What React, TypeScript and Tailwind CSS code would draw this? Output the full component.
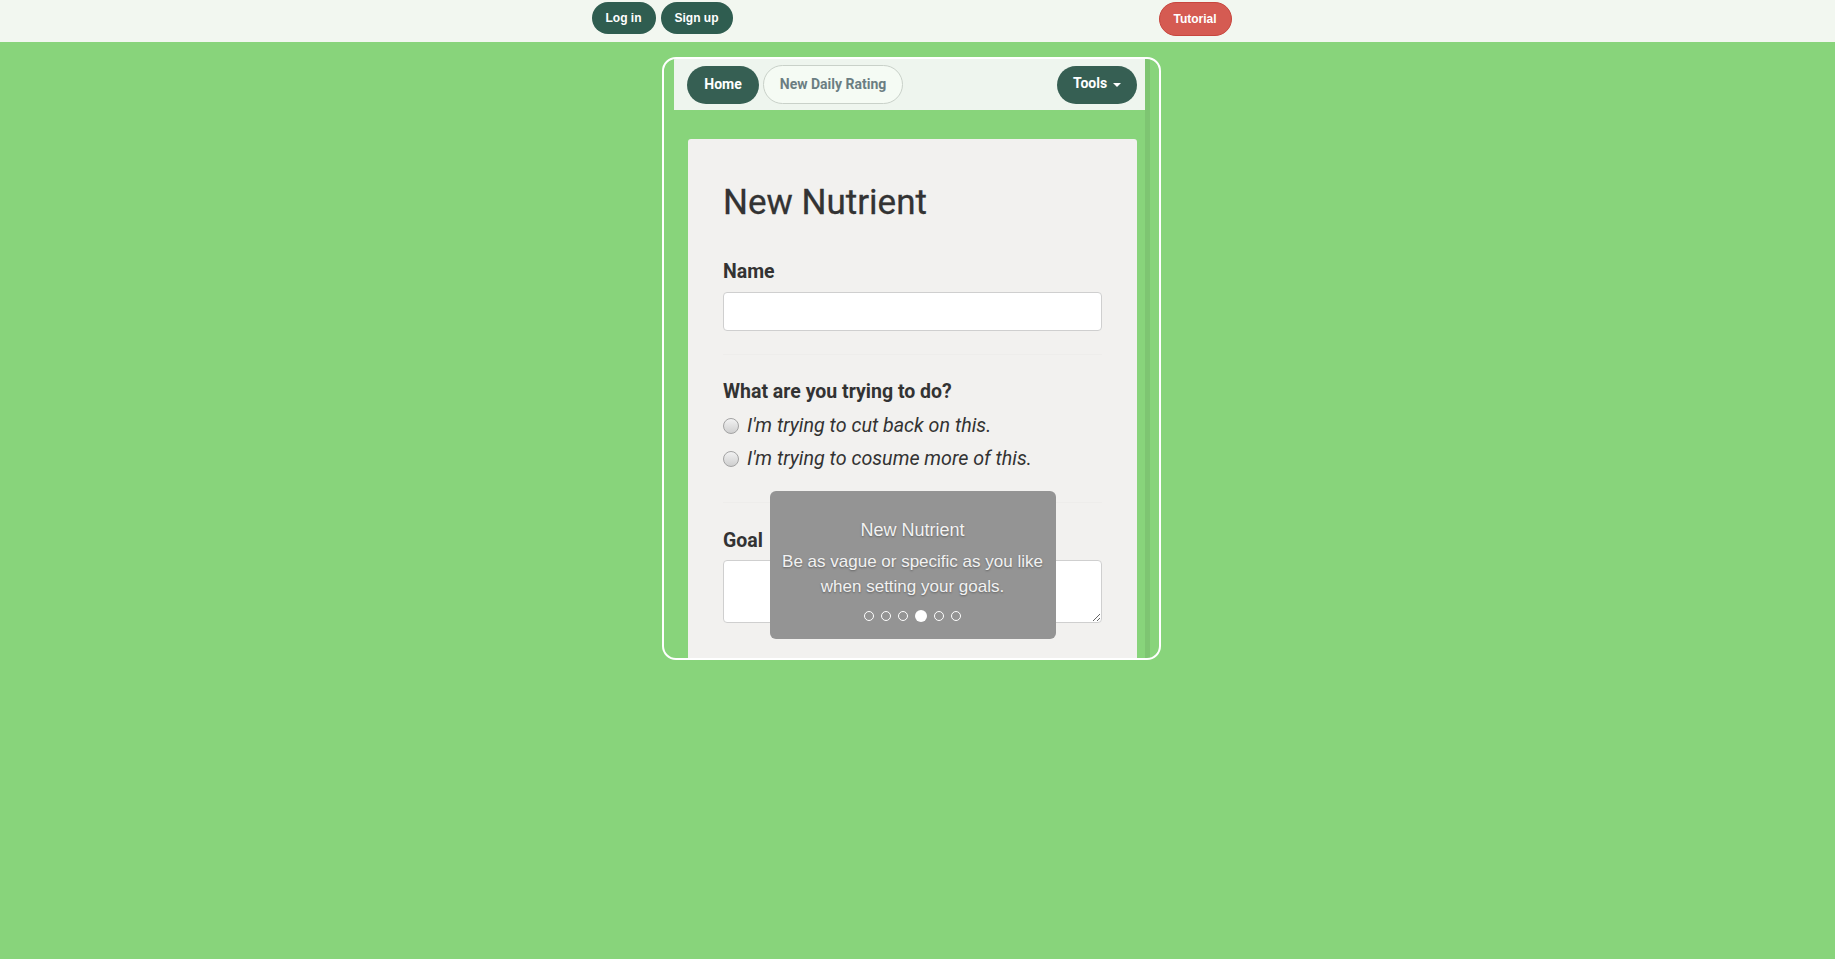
import React from 'react';

const sans = { fontFamily: '"Liberation Sans", Arial, sans-serif' };
const roboto = { fontFamily: 'Roboto, "Liberation Sans", sans-serif' };

function Radio({ label }: { label: string }) {
  return (
    <label className="flex items-center h-[33px]">
      <span className="w-4 h-4 rounded-full border border-[#a3a3a3] bg-gradient-to-b from-[#f2f2f2] to-[#cfcfcf] shrink-0" />
      <span className="ml-2 text-[19.7px] italic text-[#333] leading-[33px]">{label}</span>
    </label>
  );
}

export default function App() {
  const dots = [0, 1, 2, 3, 4, 5];
  return (
    <div className="min-h-screen bg-[#88d47b]">
      {/* Top bar */}
      <div className="h-[42px] bg-[#f2f7f0] flex justify-center pr-[12px]" style={sans}>
        <div className="w-[652px] flex items-start pt-[2px] px-[6px]">
          <button className="h-8 w-16 rounded-full bg-[#2f5d50] text-white text-[12px] font-bold">Log in</button>
          <button className="h-8 w-[72px] ml-[5px] rounded-full bg-[#2f5d50] text-white text-[12px] font-bold">Sign up</button>
          <button className="h-[34px] w-[73px] ml-auto rounded-full bg-[#d55b52] border border-[#c8463e] text-white text-[12px] font-bold">Tutorial</button>
        </div>
      </div>

      {/* Frame */}
      <div className="flex justify-center pr-[12px] pt-[15px]">
        <div className="w-[499px] h-[603px] border-2 border-white rounded-[14px] overflow-hidden flex pl-[10px] pr-[9px]" style={roboto}>
          <div className="flex-1 flex flex-col">
            {/* Navbar */}
            <div className="h-[51px] bg-[#eef5ee] flex items-center pl-[13px] pr-[8px] shrink-0">
              <button className="h-[38px] w-[72px] rounded-full bg-[#365f53] text-white text-[14px] font-bold pb-[1px]">Home</button>
              <button className="h-[39px] w-[140px] ml-[4px] rounded-full bg-[#f5fbf4] border border-[#c9d1c9] text-[#6b7e82] text-[14px] font-bold">New Daily Rating</button>
              <button className="h-[38px] w-[80px] ml-auto rounded-full bg-[#365f53] text-white text-[14px] font-bold flex items-center justify-center gap-[6px] pb-[2px]">
                Tools
                <span className="w-0 h-0 border-l-[4px] border-r-[4px] border-t-[4px] border-l-transparent border-r-transparent border-t-white mt-[2px]" />
              </button>
            </div>

            {/* Card */}
            <div className="pt-[29px] pl-[14px] pr-[8px]">
              <div className="relative bg-[#f2f1ef] rounded-[3px] px-[35px] pt-[43px] pb-12 text-[#333]">
                <h1 className="text-[35px] leading-[42px] font-normal [-webkit-text-stroke:0.3px_#333]">New Nutrient</h1>

                <div className="mt-[36px] text-[19.5px] leading-6 font-bold">Name</div>
                <input className="mt-[8px] w-full h-[39px] bg-white border border-[#cfcfcf] rounded-[4px]" />

                <div className="mt-[23px] border-t border-[#eeedeb]" />

                <div className="mt-[25px] text-[19.5px] leading-6 font-bold">What are you trying to do?</div>
                <div className="mt-[5px]">
                  <Radio label="I'm trying to cut back on this." />
                  <Radio label="I'm trying to cosume more of this." />
                </div>

                <div className="mt-[27px] border-t border-[#eeedeb]" />

                <div className="mt-[26px] text-[19.5px] leading-6 font-bold">Goal</div>
                <textarea className="mt-[7px] w-full h-[63px] block bg-white border border-[#cfcfcf] rounded-[4px]" />

                {/* Tutorial tooltip */}
                <div
                  className="absolute left-1/2 -translate-x-1/2 top-[352px] w-[286px] rounded-[6px] bg-[#949494] px-[10px] pt-[28px] pb-[17px] text-center text-[#f2f2f2] [text-shadow:0_1px_2px_rgba(0,0,0,0.35)]"
                  style={sans}
                >
                  <div className="text-[18px] leading-[22px]">New Nutrient</div>
                  <div className="mt-[8px] text-[17px] leading-[25px]">Be as vague or specific as you like when setting your goals.</div>
                  <div className="mt-[11px] h-3 flex items-center justify-center gap-[7px]">
                    {dots.map((d) =>
                      d === 3 ? (
                        <span key={d} className="w-3 h-3 rounded-full bg-white" />
                      ) : (
                        <span key={d} className="w-[10px] h-[10px] rounded-full border border-white" />
                      )
                    )}
                  </div>
                </div>
              </div>
            </div>
          </div>
          {/* scrollbar track */}
          <div className="w-[5px] bg-black/[0.07]" />
        </div>
      </div>
    </div>
  );
}
